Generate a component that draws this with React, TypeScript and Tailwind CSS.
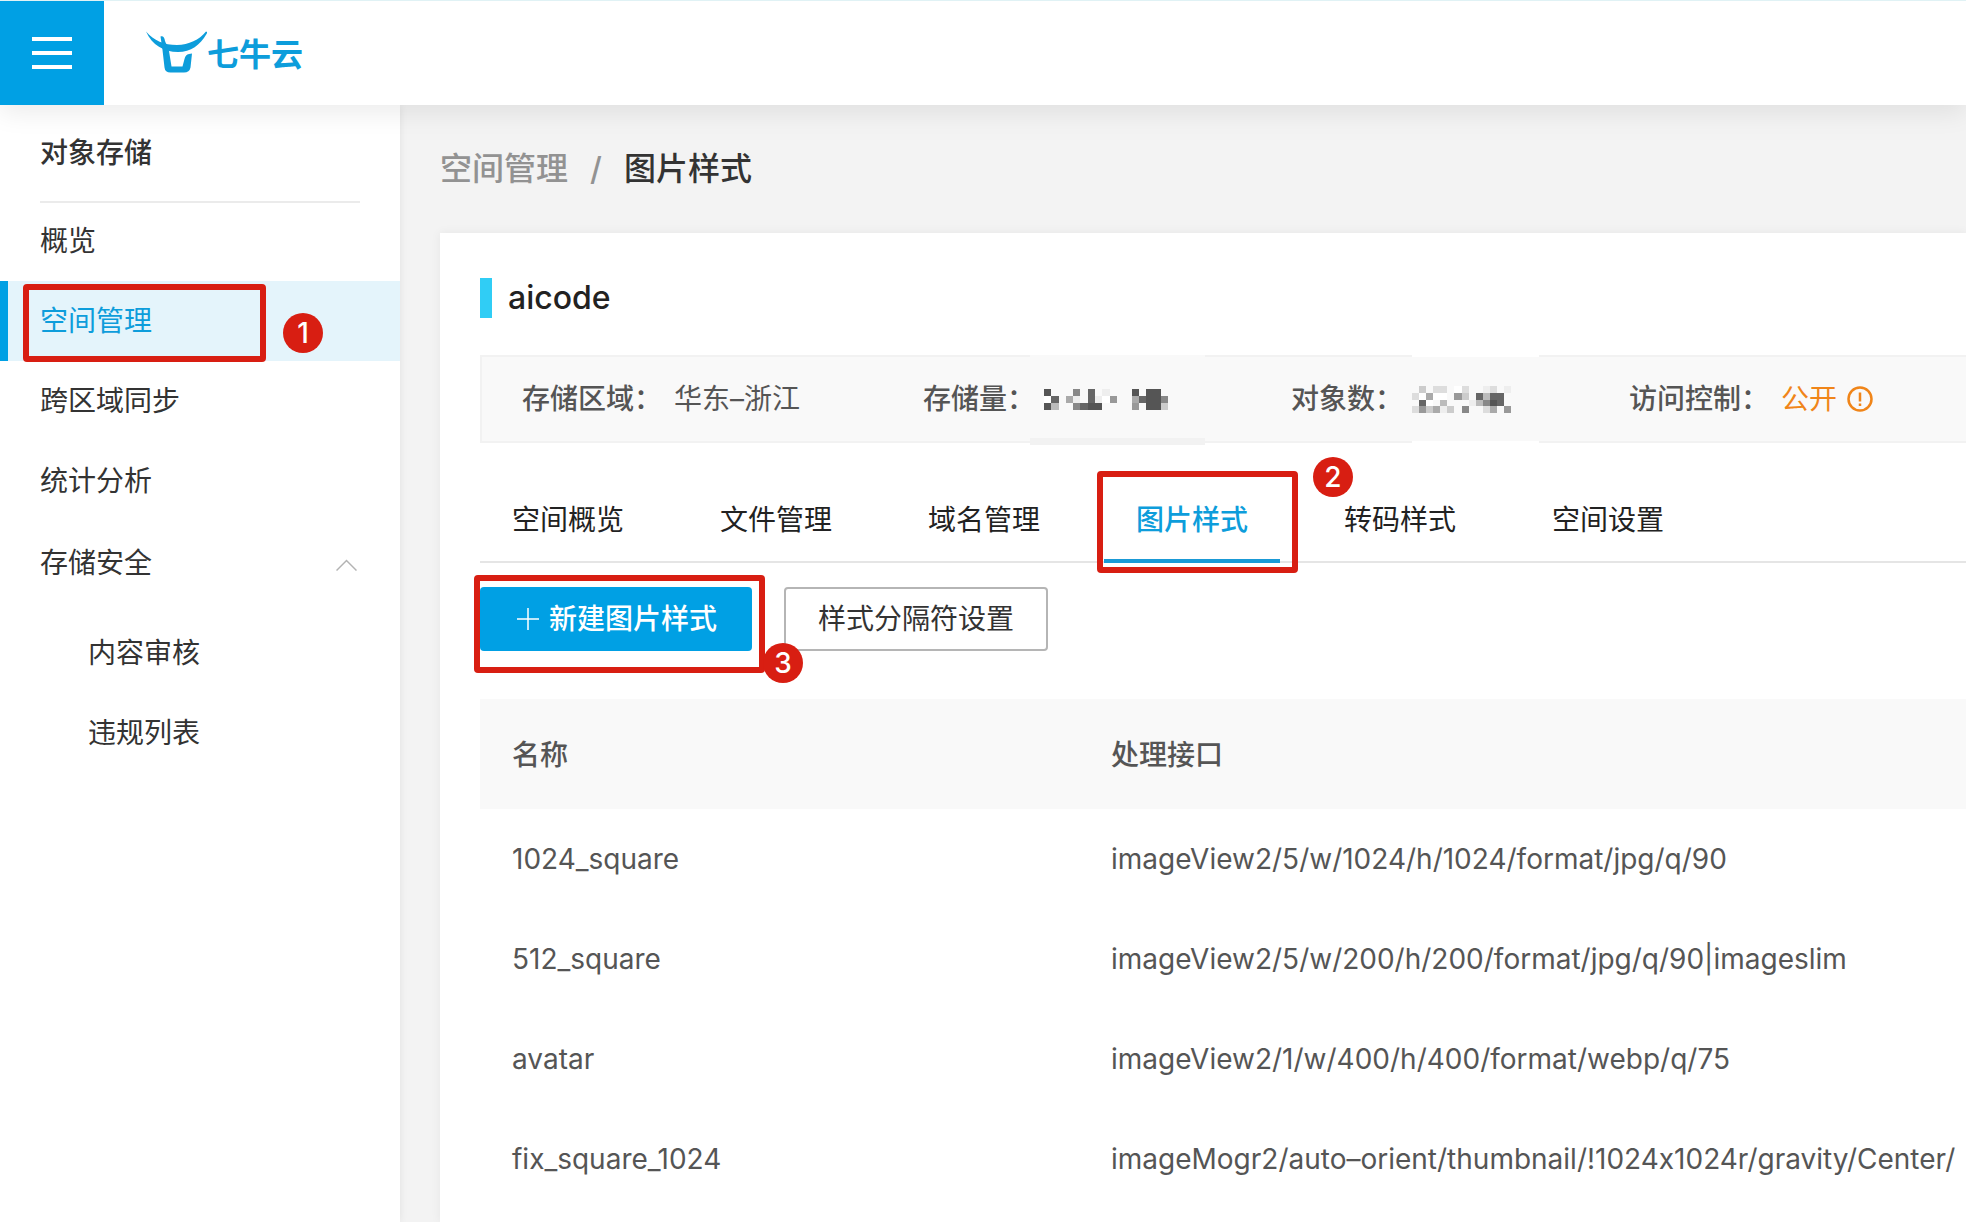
import React from 'react';
import clsx from 'clsx';

interface StyleRow {
  name: string;
  api: string;
}

const mainMenu = ['概览', '空间管理', '跨区域同步', '统计分析'];
const securityMenu = ['内容审核', '违规列表'];
const tabs = ['空间概览', '文件管理', '域名管理', '图片样式', '转码样式', '空间设置'];

const styleRows: StyleRow[] = [
  { name: '1024_square', api: 'imageView2/5/w/1024/h/1024/format/jpg/q/90' },
  { name: '512_square', api: 'imageView2/5/w/200/h/200/format/jpg/q/90|imageslim' },
  { name: 'avatar', api: 'imageView2/1/w/400/h/400/format/webp/q/75' },
  { name: 'fix_square_1024', api: 'imageMogr2/auto–orient/thumbnail/!1024x1024r/gravity/Center/' },
];

// One hex digit per cell, used as a grey level. A dot leaves the cell empty.
const storageMosaic = [
  '5...8.6.e...5.55.',
  'f6.ae.6ef9..a6558',
  '5b..8655....9.55c',
];
const objectMosaic = [
  '.c.dd.fd..ed.e',
  'dfaff.9c.6b66.',
  '.6f.b...eb856.',
  'd9caec.8..da.9',
];

function Mosaic({ rows, className, label }: { rows: string[]; className: string; label: string }) {
  return (
    <svg
      className={className}
      viewBox={`0 0 ${rows[0].length} ${rows.length}`}
      preserveAspectRatio="none"
      shapeRendering="crispEdges"
      role="img"
      aria-label={label}
    >
      {rows.map((row, y) =>
        row.split('').map((level, x) =>
          level === '.' ? null : (
            <rect key={`${x}-${y}`} x={x} y={y} width="1" height="1" fill={`#${level}${level}${level}`} />
          )
        )
      )}
    </svg>
  );
}

function Marker({ className }: { className: string }) {
  return <span className={clsx('pointer-events-none absolute z-10 rounded-sm border-6 border-[#d81e12]', className)} />;
}

function StepBadge({ step, className }: { step: number; className: string }) {
  return (
    <span
      className={clsx(
        'pointer-events-none absolute z-10 flex size-10 items-center justify-center rounded-full bg-[#d81e12] text-[28px] font-medium leading-none text-white',
        className
      )}
    >
      {step}
    </span>
  );
}

function Logo() {
  return (
    <a href="#" className="ml-[42px] flex items-start text-[#0d9ddb]">
      <svg className="h-[42px] w-[61px]" viewBox="0 0 61 42" fill="currentColor" aria-hidden="true">
        <path d="M0 0.500C8 9.500 18 14 31 14C43 13.500 53 9 60 0.500C61 0.500 61.500 1.500 60.500 3C54 14 45 21 32 21C18 21 6 14 0 0.500Z" />
        <path d="M14.500 5.500C17 4.500 18.500 6.500 19 10L23 20L25.500 35.500H36.500L38.500 28Q39.500 23.500 43 23L46 22.500L44.500 36.500Q43.500 41.500 38 41.500H24.500Q19 41.500 18.500 36.500L16.500 19L15.500 12Z" />
      </svg>
      <span className="pt-1 text-[32px] font-bold leading-10">七牛云</span>
    </a>
  );
}

function Sidebar() {
  return (
    <aside className="relative w-[400px] shrink-0 bg-white shadow-[0_0_8px_rgba(0,0,0,0.08)]">
      <h2 className="mx-10 flex h-[98px] items-center border-b-2 border-[#ebebeb] font-medium">对象存储</h2>
      <nav className="-mt-0.5">
        {mainMenu.map((item) => {
          const active = item === '空间管理';
          return (
            <div key={item} className="relative">
              <a
                href="#"
                className={clsx(
                  'flex h-20 items-center border-l-8 pl-8',
                  active ? 'border-[#00a0e4] bg-[#e4f4fb] text-[#0d9ddb]' : 'border-transparent'
                )}
              >
                {item}
              </a>
              {active && (
                <>
                  <Marker className="left-[23px] top-[3px] h-[78px] w-[243px]" />
                  <StepBadge step={1} className="left-[283px] top-8" />
                </>
              )}
            </div>
          );
        })}
        <button type="button" className="flex h-[84px] w-full items-center justify-between pl-10 pr-[43px]">
          存储安全
          <svg className="mt-1 h-3 w-[21px]" viewBox="0 0 21 12" fill="none" stroke="#b3b3b3" strokeWidth="1.5" aria-hidden="true">
            <path d="M0.500 11.500L10.500 1.500L20.500 11.500" />
          </svg>
        </button>
        <div className="pt-2">
          {securityMenu.map((item) => (
            <a key={item} href="#" className="flex h-20 items-center pl-[88px]">
              {item}
            </a>
          ))}
        </div>
      </nav>
    </aside>
  );
}

function BucketInfo() {
  return (
    <dl className="relative mt-[37px] flex h-[88px] items-center border-2 border-r-0 border-[#f2f2f2] bg-[#f9f9f9] pl-10 text-[#555]">
      <div className="flex w-[401px] shrink-0 items-center gap-3">
        <dt className="font-medium">存储区域：</dt>
        <dd>华东–浙江</dd>
      </div>
      <div className="flex w-[368px] shrink-0 items-center gap-[9px]">
        <dt className="font-medium">存储量：</dt>
        <dd>
          <Mosaic rows={storageMosaic} className="h-[21px] w-[124px]" label="存储量" />
        </dd>
      </div>
      <div className="flex w-[338px] shrink-0 items-center gap-[9px]">
        <dt className="font-medium">对象数：</dt>
        <dd>
          <Mosaic rows={objectMosaic} className="h-[27px] w-[99px]" label="对象数" />
        </dd>
      </div>
      <div className="flex shrink-0 items-center gap-3">
        <dt className="font-medium">访问控制：</dt>
        <dd className="flex items-center gap-[10px] text-[#f08519]">
          公开
          <svg className="size-[26px]" viewBox="0 0 26 26" fill="none" stroke="currentColor" strokeWidth="2.500" aria-hidden="true">
            <circle cx="13" cy="13" r="11.500" />
            <path d="M13 6.500V15.500M13 17.500V20" />
          </svg>
        </dd>
      </div>
      {/* borders are smudged around the masked values */}
      <span className="absolute -top-0.5 left-[548px] h-0.5 w-[175px] bg-[#f9f9f9]" />
      <span className="absolute -bottom-1 left-[548px] h-[7px] w-[175px] bg-[#f2f2f2]" />
      <span className="absolute -top-0.5 left-[930px] h-0.5 w-[127px] bg-white" />
      <span className="absolute -bottom-0.5 left-[930px] h-0.5 w-[127px] bg-white" />
    </dl>
  );
}

function Tabs() {
  return (
    <div role="tablist" className="mt-[34px] flex h-[86px] gap-8 border-b-2 border-[#e5e5e5]">
      {tabs.map((tab) => {
        const active = tab === '图片样式';
        return (
          <div key={tab} className="relative flex w-44 shrink-0">
            <button
              type="button"
              role="tab"
              aria-selected={active}
              className={clsx(
                '-mb-0.5 flex-1 border-b-4 pt-1',
                active ? 'border-[#1a9ad6] font-medium text-[#0d9ddb]' : 'border-transparent text-[#222]'
              )}
            >
              {tab}
            </button>
            {active && (
              <>
                <Marker className="-left-[7px] -top-1.5 h-[102px] w-[201px]" />
                <StepBadge step={2} className="-top-5 left-[209px]" />
              </>
            )}
          </div>
        );
      })}
    </div>
  );
}

function Actions() {
  return (
    <div className="mt-6 flex gap-8">
      <div className="relative">
        <button
          type="button"
          className="flex h-16 w-[272px] items-center justify-center gap-[10px] rounded bg-[#00a0e4] pl-0.5 font-medium text-white"
        >
          <svg className="size-[22px]" viewBox="0 0 22 22" stroke="currentColor" strokeWidth="1.500" aria-hidden="true">
            <path d="M0 11H22M11 0V22" />
          </svg>
          新建图片样式
        </button>
        <Marker className="-left-1.5 -top-3 h-[98px] w-[291px]" />
        <StepBadge step={3} className="left-[283px] top-14" />
      </div>
      <button type="button" className="h-16 w-[264px] rounded border-2 border-[#b5b5b5] bg-white">
        样式分隔符设置
      </button>
    </div>
  );
}

function StyleTable() {
  return (
    <table className="mt-12 w-full table-fixed whitespace-nowrap text-left text-[#555]">
      <thead>
        <tr className="h-[110px] bg-[#f9f9f9]">
          <th className="w-[599px] pl-8 pt-0.5 font-medium">名称</th>
          <th className="pl-8 pt-0.5 font-medium">处理接口</th>
        </tr>
      </thead>
      <tbody>
        {styleRows.map((row) => (
          <tr key={row.name} className="h-[100px]">
            <td className="pl-8">{row.name}</td>
            <td className="overflow-hidden pl-8">{row.api}</td>
          </tr>
        ))}
      </tbody>
    </table>
  );
}

export default function App() {
  return (
    <div className="flex min-h-screen flex-col overflow-hidden bg-[#f3f3f3] font-['Inter','Noto_Sans_CJK_SC',sans-serif] text-[28px] leading-10 text-[#333] [font-feature-settings:'calt'_0]">
      <header className="relative z-20 flex items-center border-t border-[#e0f2f5] bg-white shadow-[0_8px_24px_rgba(0,0,0,0.08)]">
        <button type="button" aria-label="菜单" className="flex size-[104px] flex-col items-center justify-center gap-[10px] bg-[#00a0e4]">
          <span className="h-1 w-10 bg-white" />
          <span className="h-1 w-10 bg-white" />
          <span className="h-1 w-10 bg-white" />
        </button>
        <Logo />
      </header>
      <div className="flex flex-1">
        <Sidebar />
        <main className="flex min-w-0 flex-1 flex-col pl-10">
          <div className="flex h-32 items-center text-[32px] font-medium">
            <a href="#" className="text-[#929292]">空间管理</a>
            <span className="w-14 text-center text-[#929292]">/</span>
            <h1>图片样式</h1>
          </div>
          <section className="flex-1 bg-white pl-10 pt-[45px] shadow-[0_0_10px_rgba(0,0,0,0.06)]">
            <h2 className="flex h-10 items-center border-l-12 border-[#30cdf5] pl-4 text-[32px] font-medium text-[#222]">
              aicode
            </h2>
            <BucketInfo />
            <Tabs />
            <Actions />
            <StyleTable />
          </section>
        </main>
      </div>
    </div>
  );
}
